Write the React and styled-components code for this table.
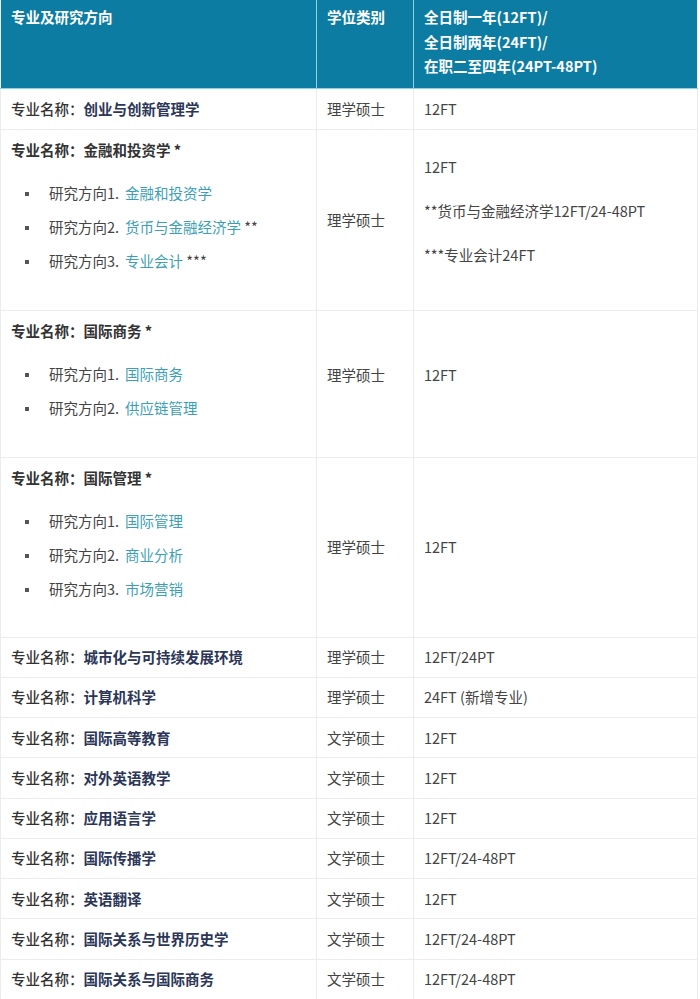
import React from "react";
import styled, { createGlobalStyle } from "styled-components";

const Global = createGlobalStyle`
  html, body { margin: 0; padding: 0; background: #fff; }
  body { font-family: "Noto Sans CJK SC", "Noto Sans", sans-serif; }
`;

const Table = styled.table`
  width: 698px;
  border-collapse: collapse;
  table-layout: fixed;
  font-size: 14.5px;
  color: #3a3a3a;
  border-left: 1px solid #ececec;
  border-right: 1px solid #ececec;
`;

const HeadCell = styled.th`
  background: #0d7ca3;
  color: #fff;
  font-weight: 700;
  text-align: left;
  vertical-align: top;
  line-height: 24.5px;
  padding: 5px 10px 9px 10px;
  border: 1px solid #86d4e6;
  border-top: none;
  &:first-child { border-left: none; }
  &:last-child { border-right: none; }
`;

const Cell = styled.td`
  border: 1px solid #ececec;
  padding: 9px 10px ${(p) => (p.$lift ? 27 : 9)}px 10px;
  line-height: 22px;
  vertical-align: middle;
  color: ${(p) => (p.$muted ? "#444" : "#3a3a3a")};
`;

const SimpleRow = styled.tr`
  height: ${(p) => p.$h || 40.25}px;
  & > td { padding-top: 0; padding-bottom: 0; }
`;

const Label = styled.span`
  font-weight: ${(p) => (p.$light ? 500 : 700)};
  color: #333;
`;

const Name = styled.span`
  font-weight: 700;
  color: ${(p) => (p.$navy ? "#2b3658" : "#333")};
`;

const List = styled.ul`
  list-style: none;
  margin: 15px 0 ${(p) => p.$end}px 0;
  padding: 0;
`;

const Item = styled.li`
  display: flex;
  align-items: center;
  height: 34px;
  padding-left: 38px;
  position: relative;
  color: #444;
  &::before {
    content: "";
    position: absolute;
    left: 14px;
    top: 16px;
    width: 4px;
    height: 4px;
    background: #555;
  }
`;

const Link = styled.span`
  color: #3d9fb6;
  margin-left: 6px;
`;

const Stack = styled.div`
  display: flex;
  flex-direction: column;
  gap: 22px;
`;

const simple = [
  ["城市化与可持续发展环境", "理学硕士", "12FT/24PT"],
  ["计算机科学", "理学硕士", "24FT (新增专业)"],
  ["国际高等教育", "文学硕士", "12FT"],
  ["对外英语教学", "文学硕士", "12FT"],
  ["应用语言学", "文学硕士", "12FT"],
  ["国际传播学", "文学硕士", "12FT/24-48PT"],
  ["英语翻译", "文学硕士", "12FT"],
  ["国际关系与世界历史学", "文学硕士", "12FT/24-48PT"],
  ["国际关系与国际商务", "文学硕士", "12FT/24-48PT"],
];

function Directions({ items, end = 23 }) {
  return (
    <List $end={end}>
      {items.map(([n, t, s]) => (
        <Item key={n}>
          研究方向{n}.<Link>{t}</Link>
          {s ? <span>&nbsp;{s}</span> : null}
        </Item>
      ))}
    </List>
  );
}

export default function App() {
  return (
    <>
      <Global />
      <Table>
        <colgroup>
          <col style={{ width: 316 }} />
          <col style={{ width: 97 }} />
          <col />
        </colgroup>
        <thead>
          <tr>
            <HeadCell>专业及研究方向</HeadCell>
            <HeadCell>学位类别</HeadCell>
            <HeadCell>
              全日制一年(12FT)/
              <br />
              全日制两年(24FT)/
              <br />
              在职二至四年(24PT-48PT)
            </HeadCell>
          </tr>
        </thead>
        <tbody>
          <SimpleRow $h={41}>
            <Cell>
              <Label $light>专业名称：</Label>
              <Name $navy>创业与创新管理学</Name>
            </Cell>
            <Cell $muted>理学硕士</Cell>
            <Cell $muted>12FT</Cell>
          </SimpleRow>
          <tr>
            <Cell>
              <Label>专业名称：</Label>
              <Name>金融和投资学 *</Name>
              <Directions
                items={[
                  ["1", "金融和投资学"],
                  ["2", "货币与金融经济学", "**"],
                  ["3", "专业会计", "***"],
                ]}
              />
            </Cell>
            <Cell $muted>理学硕士</Cell>
            <Cell $muted $lift>
              <Stack>
                <span>12FT</span>
                <span>**货币与金融经济学12FT/24-48PT</span>
                <span>***专业会计24FT</span>
              </Stack>
            </Cell>
          </tr>
          <tr>
            <Cell>
              <Label>专业名称：</Label>
              <Name>国际商务 *</Name>
              <Directions
                items={[
                  ["1", "国际商务"],
                  ["2", "供应链管理"],
                ]}
              />
            </Cell>
            <Cell $muted $lift>理学硕士</Cell>
            <Cell $muted $lift>12FT</Cell>
          </tr>
          <tr>
            <Cell>
              <Label>专业名称：</Label>
              <Name>国际管理 *</Name>
              <Directions
                end={22}
                items={[
                  ["1", "国际管理"],
                  ["2", "商业分析"],
                  ["3", "市场营销"],
                ]}
              />
            </Cell>
            <Cell $muted>理学硕士</Cell>
            <Cell $muted>12FT</Cell>
          </tr>
          {simple.map(([name, deg, dur]) => (
            <SimpleRow key={name}>
              <Cell>
                <Label $light>专业名称：</Label>
                <Name $navy>{name}</Name>
              </Cell>
              <Cell $muted>{deg}</Cell>
              <Cell $muted>{dur}</Cell>
            </SimpleRow>
          ))}
        </tbody>
      </Table>
    </>
  );
}
